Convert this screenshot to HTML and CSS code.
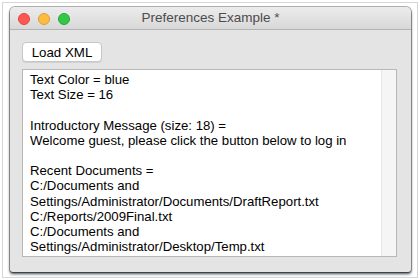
FILE: index.html
```html
<!doctype html>
<html>
<head>
<meta charset="utf-8">
<link rel="stylesheet" href="styles.css">
</head>
<body>
<div class="frame">
	<div class="window">
		<div class="titlebar">
			<div class="lights">
				<span class="light red"></span>
				<span class="light yellow"></span>
				<span class="light green"></span>
			</div>
			<div class="title">Preferences Example *</div>
		</div>
		<div class="content">
			<div class="toolbar">
				<button class="btn">Load XML</button>
			</div>
			<div class="textarea">
				<div class="text">
					<div>Text Color = blue</div>
					<div>Text Size = 16</div>
					<div class="blank"></div>
					<div>Introductory Message (size: 18) =</div>
					<div>Welcome guest, please click the button below to log in</div>
					<div class="blank"></div>
					<div>Recent Documents =</div>
					<div>C:/Documents and</div>
					<div>Settings/Administrator/Documents/DraftReport.txt</div>
					<div>C:/Reports/2009Final.txt</div>
					<div>C:/Documents and</div>
					<div>Settings/Administrator/Desktop/Temp.txt</div>
				</div>
				<div class="scrollbar"></div>
			</div>
		</div>
	</div>
</div>
</body>
</html>
```
FILE: styles.css
```css
*{
	margin:0; padding:0; box-sizing:border-box;
}
body{
	width:420px; height:280px; background:#fff;
	font-family:"Liberation Sans", Arial, sans-serif;
}
.frame{
	margin:2px; width:416px; height:276px;
	border:1px solid #d6d6d6; padding:4px 5px 3px 7px;
}
.window{
	width:401px; height:265px; background:#e4e4e4;
	border-radius:5px 5px 3px 3px; overflow:hidden;
	display:flex; flex-direction:column;
	box-shadow:0 0 0 1px rgba(0,0,0,.3), 0 2px 3px rgba(30,40,55,.85);
}
	.titlebar{
		height:23px; position:relative; flex:none;
		background:linear-gradient(#ececec, #d8d8d8);
		border-bottom:1px solid #b3b3b3;
	}
	.lights{
		position:absolute; left:8px; top:6px;
		display:flex; gap:8px;
	}
	.light{
		width:12px; height:12px; border-radius:50%;
	}
	.red{ background:#fc5753; border:1px solid #df4744; }
	.yellow{ background:#fdbc40; border:1px solid #de9f34; }
	.green{ background:#33c748; border:1px solid #27aa35; }
	.title{
		text-align:center; font-size:13.5px; line-height:22px; color:#4c4c4c;
	}
.content{
	flex:1; display:flex; flex-direction:column;
	padding:12px 14px 16px 12px; gap:7px;
}
	.btn{
		width:80px; height:20px; background:#fff;
		border:1px solid #c6c6c6; border-radius:4px;
		box-shadow:0 1px 0 rgba(0,0,0,.08);
		font-family:"Liberation Sans", Arial, sans-serif;
		font-size:13.3px; color:#000; text-align:center;
	}
	.textarea{
		flex:1; display:flex; border:1px solid #b7b7b7;
	}
	.text{
		flex:1; background:#fff; padding:2px 7px;
		font-size:13.2px; line-height:15.2px; color:#000;
		white-space:nowrap; overflow:hidden;
	}
	.blank{ height:15.2px; }
	.scrollbar{
		width:15px; background:#f5f5f5; border-left:1px solid #e6e6e6;
	}
```
